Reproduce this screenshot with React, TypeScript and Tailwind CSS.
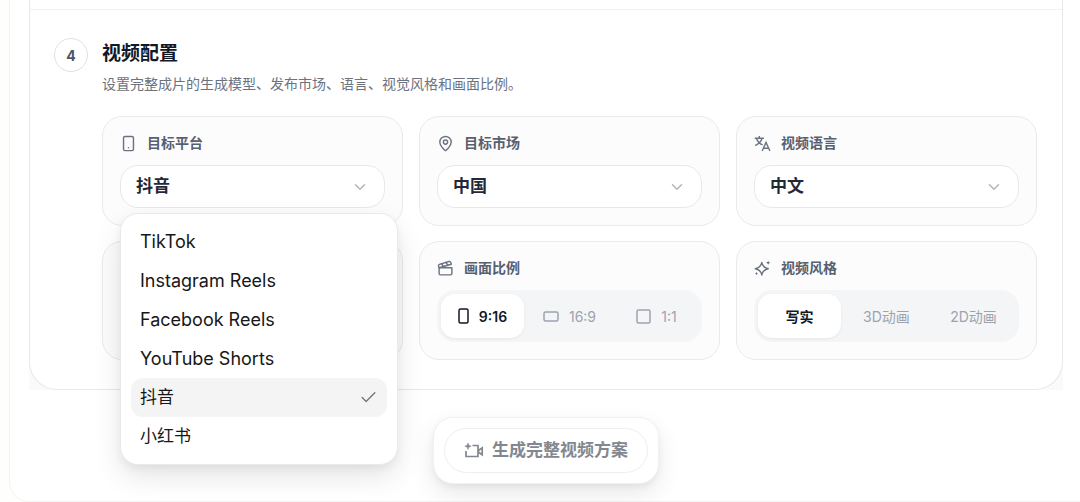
import { useState, type ReactNode } from "react";
import { Check, ChevronDown, Clapperboard, MapPin, Smartphone } from "lucide-react";

const platforms = ["TikTok", "Instagram Reels", "Facebook Reels", "YouTube Shorts", "抖音", "小红书"];

const ratios = [
  { label: "9:16", w: 9, h: 14 },
  { label: "16:9", w: 14, h: 9 },
  { label: "1:1", w: 13, h: 13 },
];

const styles = ["写实", "3D动画", "2D动画"];

function TranslateIcon() {
  return (
    <svg width="17" height="17" viewBox="0 0 24 24" fill="none" stroke="currentColor" strokeWidth="2" aria-hidden="true">
      <path d="M1 4.500h13M7.500 1.500v3M3.500 4.500c1.200 4.200 4.700 7.800 8.700 9.500M11.500 4.500C10.300 9 6.500 12.800 1.800 14.800" />
      <path d="M11.500 22.500 17 10.500l5.500 12M13.500 18.800h7" />
    </svg>
  );
}

function SparklesIcon() {
  return (
    <svg width="17" height="17" viewBox="0 0 24 24" fill="none" stroke="currentColor" strokeWidth="1.9" strokeLinejoin="round" aria-hidden="true">
      <path d="M11 3.500c1 5.600 3.200 7.800 9.200 8.900-6 1.100-8.200 3.300-9.200 8.900-1-5.600-3.200-7.800-9.200-8.900 6-1.100 8.200-3.300 9.200-8.900Z" />
      <path d="M20 .8c.5 2 1.200 2.700 3.300 3.200-2.100.5-2.800 1.200-3.300 3.200-.5-2-1.200-2.700-3.300-3.200 2.100-.5 2.800-1.200 3.300-3.200Z" fill="currentColor" stroke="none" />
      <path d="M3.500 16.500c.4 1.700 1 2.300 2.700 2.700-1.700.4-2.300 1-2.700 2.700-.4-1.700-1-2.300-2.700-2.700 1.700-.4 2.300-1 2.700-2.700Z" fill="currentColor" stroke="none" />
    </svg>
  );
}

function VideoPlusIcon() {
  return (
    <svg width="20" height="20" viewBox="0 0 20 20" fill="none" stroke="currentColor" strokeWidth="1.7" aria-hidden="true">
      <path d="M8.500 4.500H14v11H2V10" />
      <path d="M14 9.800l4.200-3v7L14 10.800" />
      <path d="M4 2 4.900 4.300 7.200 5.200 4.900 6.100 4 8.400 3.100 6.100.8 5.200 3.100 4.300Z" fill="currentColor" stroke="currentColor" strokeWidth="0.5" />
    </svg>
  );
}

function Card({ children }: { children?: ReactNode }) {
  return (
    <div className="relative flex flex-col gap-3 rounded-[20px] border border-[#e9eaee] bg-[#fcfcfc] px-[17px] pt-4 pb-[17px]">
      {children}
    </div>
  );
}

function CardTitle({ icon, htmlFor, children }: { icon: ReactNode; htmlFor?: string; children: ReactNode }) {
  const inner = (
    <>
      <span className="text-[#6b7280]">{icon}</span>
      {children}
    </>
  );
  const cls = "flex h-5 items-center gap-[10px] text-[14px] leading-5 font-semibold text-[#566070]";
  return htmlFor ? (
    <label htmlFor={htmlFor} className={cls}>{inner}</label>
  ) : (
    <h3 className={cls}>{inner}</h3>
  );
}

function SelectBox({ id, value, options, onOpen, onChange }: {
  id: string;
  value: string;
  options: string[];
  onOpen?: () => void;
  onChange?: (v: string) => void;
}) {
  return (
    <div className="grid items-center">
      <select
        id={id}
        value={value}
        onChange={(e) => onChange?.(e.target.value)}
        onMouseDown={(e) => {
          if (onOpen) {
            e.preventDefault();
            onOpen();
          }
        }}
        className="col-start-1 row-start-1 h-[43px] w-full appearance-none rounded-[18px] border border-[#e7e8ec] bg-white px-[15px] text-[17px] font-semibold text-[#1f2937] outline-none"
      >
        {options.map((o) => (
          <option key={o}>{o}</option>
        ))}
      </select>
      <ChevronDown size={18} strokeWidth={2} className="pointer-events-none col-start-1 row-start-1 mr-4 justify-self-end text-[#b5b5b5]" />
    </div>
  );
}

export default function App() {
  const [open, setOpen] = useState(true);
  const [platform, setPlatform] = useState("抖音");
  const [market, setMarket] = useState("中国");
  const [lang, setLang] = useState("中文");
  const [ratio, setRatio] = useState("9:16");
  const [style, setStyle] = useState("写实");

  const segment = "flex flex-1 items-center justify-center rounded-[14px] text-[14px]";
  const segmentOn = "bg-white font-semibold text-[#111827] shadow-[0_1px_3px_rgba(0,0,0,0.06)]";
  const segmentOff = "text-[#9ca3af]";

  return (
    <div className="overflow-hidden bg-[#fefefd] pl-[9px] font-[Inter,'Noto_Sans_CJK_SC',sans-serif]">
      <main className="rounded-bl-[20px] border-b border-l border-[#f4f4f5] bg-white pr-[17px] pb-[17px] pl-[19px]">
        <div className="bg-[#fafafa]">
          <section className="rounded-b-[28px] border-x border-b border-[#e7e8ec] bg-white">
            <div className="h-[10px] border-b border-[#f1f1f4]" />
            <div className="flex gap-[14px] pt-7 pr-[25px] pb-[29px] pl-6">
              <span className="flex size-[34px] shrink-0 items-center justify-center rounded-full border border-[#dfe1e6] text-[14px] font-bold text-[#4b5563]">
                4
              </span>
              <div className="min-w-0 flex-1">
                <h2 className="pt-px text-[19px] leading-[30px] font-bold text-[#111827]">视频配置</h2>
                <p className="mt-[3px] text-[14px] leading-6 text-[#6b7280]">
                  设置完整成片的生成模型、发布市场、语言、视觉风格和画面比例。
                </p>
                <div className="mt-5 grid grid-cols-3 gap-x-4 gap-y-[15px]">
                  <Card>
                    <CardTitle htmlFor="platform" icon={<Smartphone size={17} strokeWidth={2} />}>目标平台</CardTitle>
                    <SelectBox id="platform" value={platform} options={platforms} onOpen={() => setOpen(!open)} onChange={setPlatform} />
                    {open && (
                      <ul
                        role="listbox"
                        aria-label="目标平台"
                        className="absolute top-24 left-[17px] z-10 w-[278px] rounded-[18px] border border-[#e9eaee] bg-white px-[10px] py-2 shadow-[0_12px_28px_rgba(0,0,0,0.10),0_4px_8px_rgba(0,0,0,0.05)]"
                      >
                        {platforms.map((p) => (
                          <li key={p} role="option" aria-selected={p === platform}>
                            <button
                              type="button"
                              onClick={() => {
                                setPlatform(p);
                                setOpen(false);
                              }}
                              className={`flex h-[39px] w-full items-center justify-between rounded-[12px] px-[9px] text-left text-[#171717] ${/^[A-Z]/.test(p) ? "text-[18px]" : "text-[17px]"} ${p === platform ? "bg-[#f4f4f4]" : ""}`}
                            >
                              {p}
                              {p === platform && <Check size={19} strokeWidth={1.8} className="text-[#777]" />}
                            </button>
                          </li>
                        ))}
                      </ul>
                    )}
                  </Card>
                  <Card>
                    <CardTitle htmlFor="market" icon={<MapPin size={17} strokeWidth={2} />}>目标市场</CardTitle>
                    <SelectBox id="market" value={market} options={["中国", "美国"]} onChange={setMarket} />
                  </Card>
                  <Card>
                    <CardTitle htmlFor="lang" icon={<TranslateIcon />}>视频语言</CardTitle>
                    <SelectBox id="lang" value={lang} options={["中文", "English"]} onChange={setLang} />
                  </Card>

                  <Card />
                  <Card>
                    <CardTitle icon={<Clapperboard size={17} strokeWidth={2} />}>画面比例</CardTitle>
                    <div className="flex h-[52px] gap-1 rounded-[18px] bg-[#f4f5f7] p-1">
                      {ratios.map((r) => (
                        <button
                          key={r.label}
                          type="button"
                          aria-pressed={r.label === ratio}
                          onClick={() => setRatio(r.label)}
                          className={`${segment} gap-[10px] ${r.label === ratio ? segmentOn : segmentOff}`}
                        >
                          <svg width={r.w + 2} height={r.h + 2} fill="none" stroke="currentColor" strokeWidth="1.5" aria-hidden="true">
                            <rect x="1" y="1" width={r.w} height={r.h} rx="1.5" />
                          </svg>
                          {r.label}
                        </button>
                      ))}
                    </div>
                  </Card>
                  <Card>
                    <CardTitle icon={<SparklesIcon />}>视频风格</CardTitle>
                    <div className="flex h-[52px] gap-1 rounded-[18px] bg-[#f4f5f7] p-1">
                      {styles.map((s) => (
                        <button
                          key={s}
                          type="button"
                          aria-pressed={s === style}
                          onClick={() => setStyle(s)}
                          className={`${segment} ${s === style ? segmentOn : segmentOff}`}
                        >
                          {s}
                        </button>
                      ))}
                    </div>
                  </Card>
                </div>
              </div>
            </div>
          </section>
        </div>

        <div className="mt-[27px] flex justify-center">
          <div className="rounded-[20px] border border-[#f1f1f3] bg-white p-[10px] shadow-[0_10px_24px_rgba(0,0,0,0.09),0_3px_6px_rgba(0,0,0,0.05)]">
            <button
              type="button"
              className="flex h-[45px] items-center gap-2 rounded-full border border-[#eeeeef] bg-white px-[19px] text-[17px] font-semibold text-[#83878f]"
            >
              <VideoPlusIcon />
              生成完整视频方案
            </button>
          </div>
        </div>
      </main>
    </div>
  );
}
